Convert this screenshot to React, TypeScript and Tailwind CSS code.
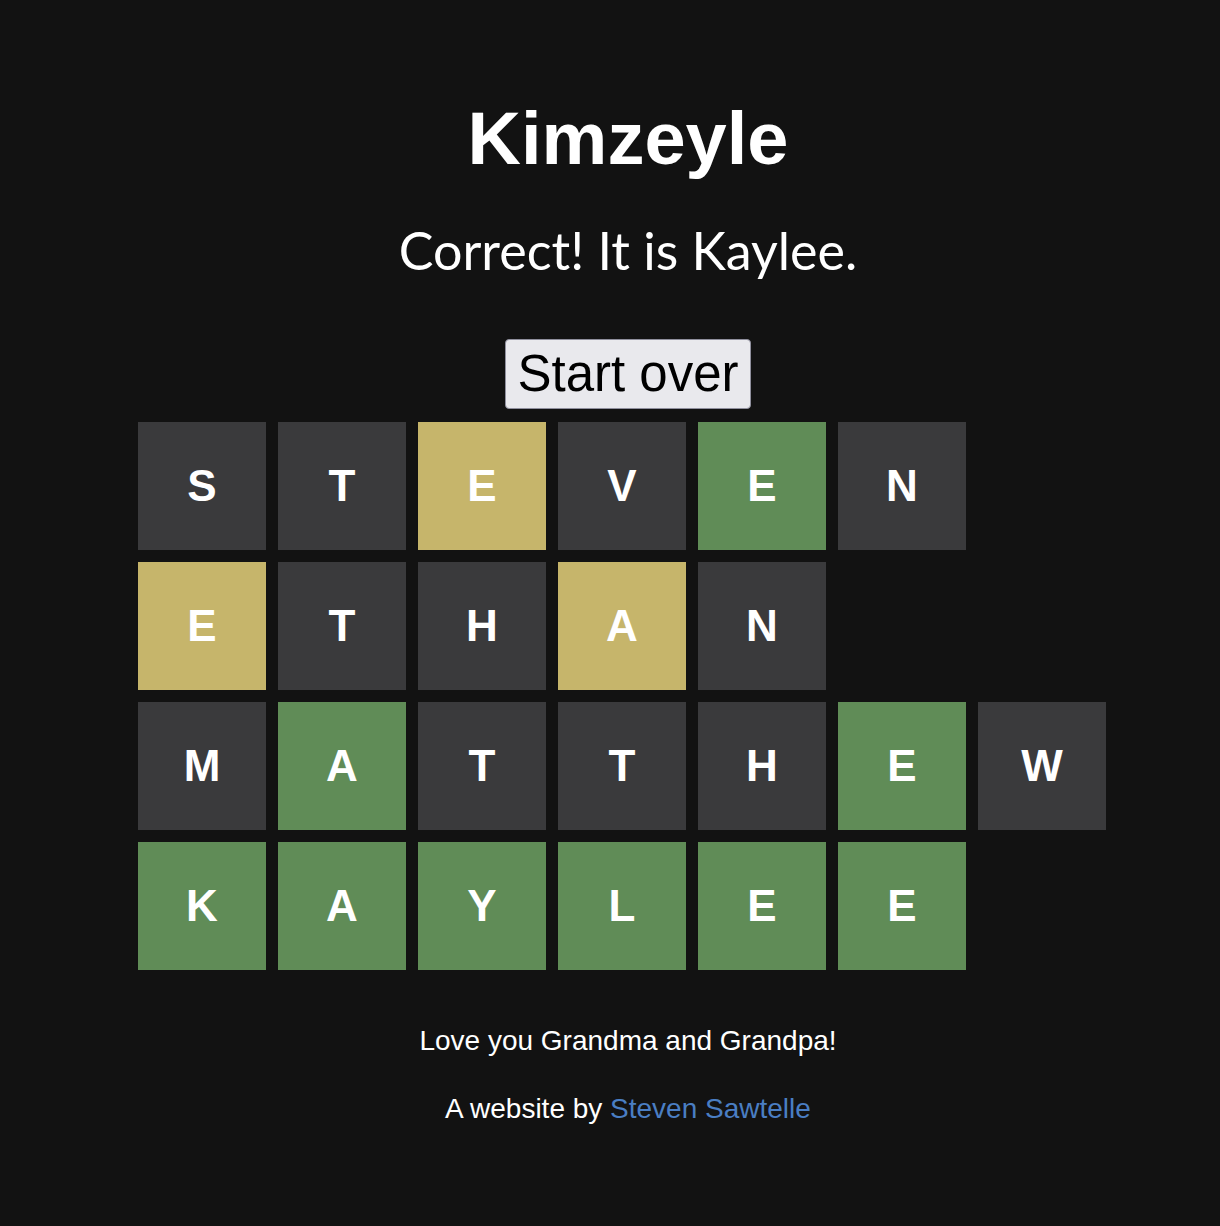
import React from "react";

type C = "d" | "y" | "g";
const rows: [string, C][][] = [
  [["S","d"],["T","d"],["E","y"],["V","d"],["E","g"],["N","d"]],
  [["E","y"],["T","d"],["H","d"],["A","y"],["N","d"]],
  [["M","d"],["A","g"],["T","d"],["T","d"],["H","d"],["E","g"],["W","d"]],
  [["K","g"],["A","g"],["Y","g"],["L","g"],["E","g"],["E","g"]],
];

const bg: Record<C, string> = {
  d: "bg-[#3a3a3c]",
  y: "bg-[#c6b56b]",
  g: "bg-[#608c57]",
};

export default function App() {
  return (
    <div className="min-h-[1226px] w-full bg-[#121212] pl-[36px] text-white" style={{ fontFamily: '"Liberation Sans", Arial, sans-serif' }}>
      <div className="flex flex-col items-center">
        <h1 className="mt-[102px] text-[74px] font-bold leading-none">Kimzeyle</h1>
        <p className="mt-[48px] text-[52px] leading-none" style={{ fontFamily: 'Lato, sans-serif' }}>Correct! It is Kaylee.</p>
        <button className="mt-[63px] rounded-[4px] border border-[#8f8f9d] bg-[#e9e9ed] px-[11px] py-[5px] text-[51px] leading-[58px] text-black">Start over</button>
        <div className="mt-[13px] flex w-[980px] flex-col gap-3">
          {rows.map((r, i) => (
            <div key={i} className="flex">
              {r.map(([l, c], j) => (
                <div key={j} className={`mr-3 flex h-[128px] w-[128px] items-center justify-center text-[44px] font-bold ${bg[c]}`}>{l}</div>
              ))}
            </div>
          ))}
        </div>
        <p className="mt-[57px] text-[28px] leading-none">Love you Grandma and Grandpa!</p>
        <p className="mt-[40px] text-[28px] leading-none">A website by <a className="text-[#4a7ec3]">Steven Sawtelle</a></p>
      </div>
    </div>
  );
}
